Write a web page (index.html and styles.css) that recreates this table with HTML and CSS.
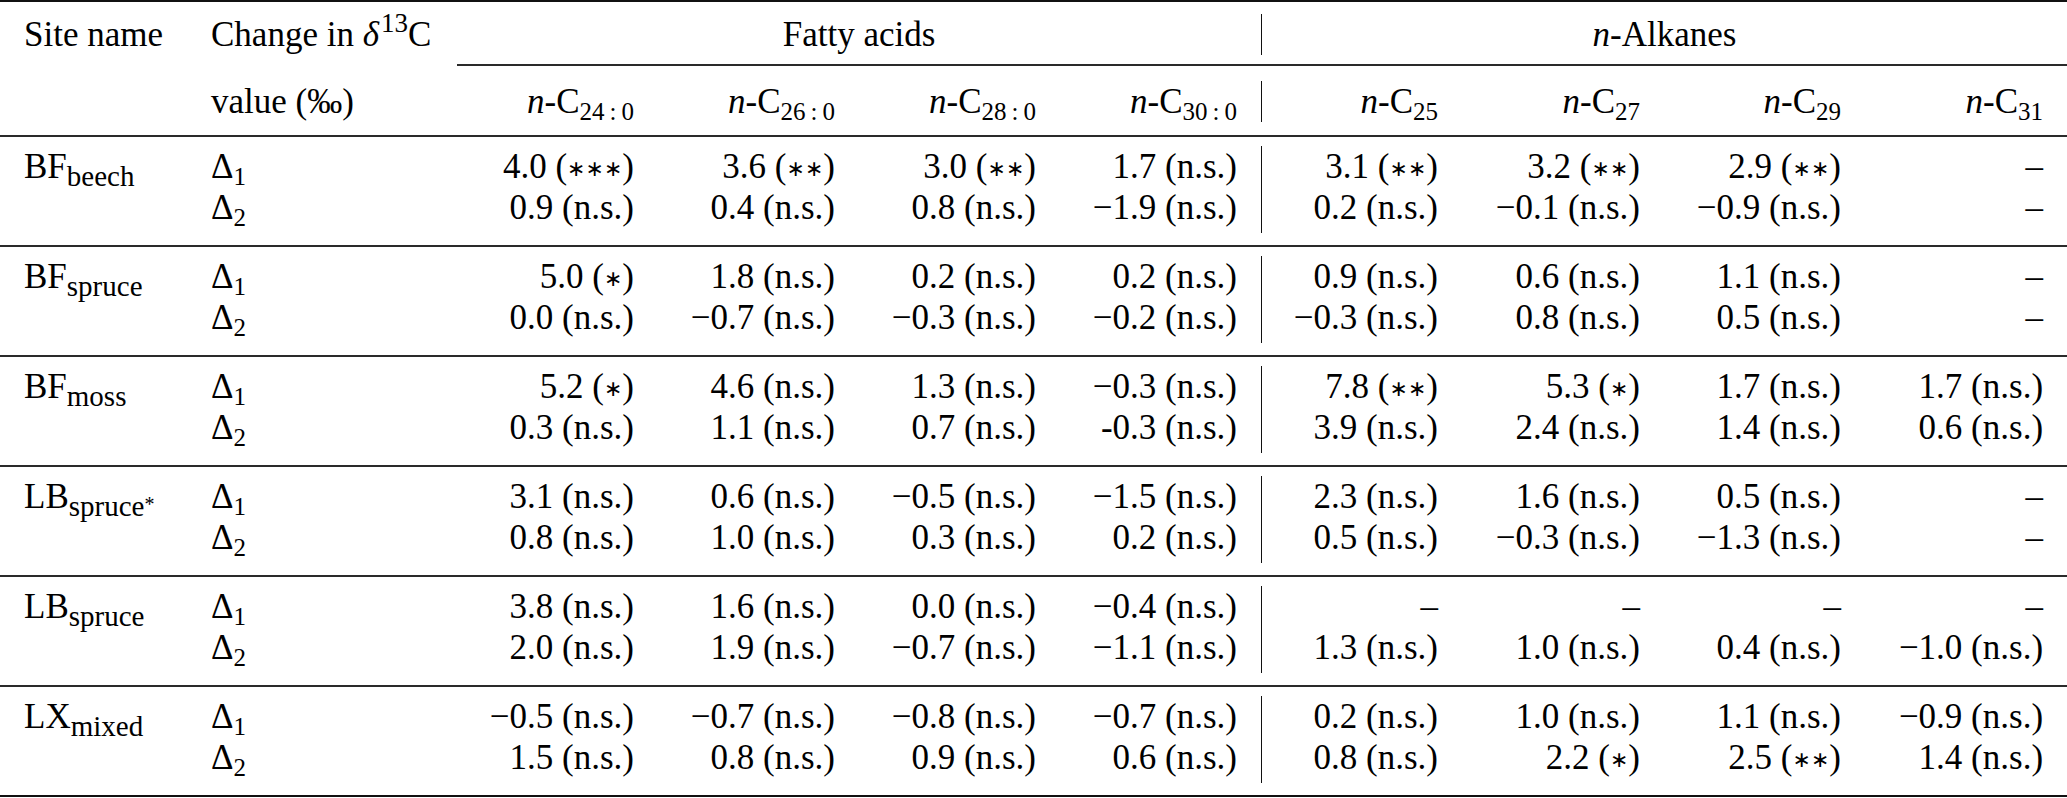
FILE: index.html
```html
<!DOCTYPE html>
<html lang="en">
<head>
<meta charset="utf-8">
<title>Change in δ13C values</title>
<link rel="stylesheet" href="styles.css">
</head>
<body>
<table class="tbl">
  <colgroup>
    <col class="c-site"><col class="c-chg">
    <col class="c-num"><col class="c-num"><col class="c-num"><col class="c-num">
    <col class="c-num"><col class="c-num2"><col class="c-num"><col class="c-num2">
  </colgroup>
  <thead>
    <tr class="h1">
      <td class="lbl">Site name</td>
      <td class="lbl">Change in <i class="delta">δ</i><sup>13</sup>C</td>
      <td class="grp" colspan="4"><div class="in">Fatty acids</div></td>
      <td class="grp bar-cell" colspan="4"><div class="in bar"><i>n</i>-Alkanes</div></td>
    </tr>
    <tr class="h2">
      <td class="lbl"></td>
      <td class="lbl">value (‰)</td>
      <td class="num"><div class="in"><i>n</i>-C<sub>24&thinsp;:&thinsp;0</sub></div></td>
      <td class="num"><div class="in"><i>n</i>-C<sub>26&thinsp;:&thinsp;0</sub></div></td>
      <td class="num"><div class="in"><i>n</i>-C<sub>28&thinsp;:&thinsp;0</sub></div></td>
      <td class="num"><div class="in"><i>n</i>-C<sub>30&thinsp;:&thinsp;0</sub></div></td>
      <td class="num bar-cell"><div class="in bar"><i>n</i>-C<sub>25</sub></div></td>
      <td class="num"><div class="in"><i>n</i>-C<sub>27</sub></div></td>
      <td class="num"><div class="in"><i>n</i>-C<sub>29</sub></div></td>
      <td class="num"><div class="in"><i>n</i>-C<sub>31</sub></div></td>
    </tr>
  </thead>
  <tbody>
    <tr class="g">
      <td class="lbl"><div class="in"><div class="ln">BF<sub class="site">beech</sub></div></div></td>
      <td class="lbl"><div class="in"><div class="ln">Δ<sub>1</sub></div><div class="ln">Δ<sub>2</sub></div></div></td>
      <td class="num"><div class="in"><div class="ln">4.0 (<span class="ast">∗∗∗</span>)</div><div class="ln">0.9 (n.s.)</div></div></td>
      <td class="num"><div class="in"><div class="ln">3.6 (<span class="ast">∗∗</span>)</div><div class="ln">0.4 (n.s.)</div></div></td>
      <td class="num"><div class="in"><div class="ln">3.0 (<span class="ast">∗∗</span>)</div><div class="ln">0.8 (n.s.)</div></div></td>
      <td class="num"><div class="in"><div class="ln">1.7 (n.s.)</div><div class="ln">−1.9 (n.s.)</div></div></td>
      <td class="num bar-cell"><div class="in bar"><div class="ln">3.1 (<span class="ast">∗∗</span>)</div><div class="ln">0.2 (n.s.)</div></div></td>
      <td class="num"><div class="in"><div class="ln">3.2 (<span class="ast">∗∗</span>)</div><div class="ln">−0.1 (n.s.)</div></div></td>
      <td class="num"><div class="in"><div class="ln">2.9 (<span class="ast">∗∗</span>)</div><div class="ln">−0.9 (n.s.)</div></div></td>
      <td class="num"><div class="in"><div class="ln">–</div><div class="ln">–</div></div></td>
    </tr>
    <tr class="g">
      <td class="lbl"><div class="in"><div class="ln">BF<sub class="site">spruce</sub></div></div></td>
      <td class="lbl"><div class="in"><div class="ln">Δ<sub>1</sub></div><div class="ln">Δ<sub>2</sub></div></div></td>
      <td class="num"><div class="in"><div class="ln">5.0 (<span class="ast">∗</span>)</div><div class="ln">0.0 (n.s.)</div></div></td>
      <td class="num"><div class="in"><div class="ln">1.8 (n.s.)</div><div class="ln">−0.7 (n.s.)</div></div></td>
      <td class="num"><div class="in"><div class="ln">0.2 (n.s.)</div><div class="ln">−0.3 (n.s.)</div></div></td>
      <td class="num"><div class="in"><div class="ln">0.2 (n.s.)</div><div class="ln">−0.2 (n.s.)</div></div></td>
      <td class="num bar-cell"><div class="in bar"><div class="ln">0.9 (n.s.)</div><div class="ln">−0.3 (n.s.)</div></div></td>
      <td class="num"><div class="in"><div class="ln">0.6 (n.s.)</div><div class="ln">0.8 (n.s.)</div></div></td>
      <td class="num"><div class="in"><div class="ln">1.1 (n.s.)</div><div class="ln">0.5 (n.s.)</div></div></td>
      <td class="num"><div class="in"><div class="ln">–</div><div class="ln">–</div></div></td>
    </tr>
    <tr class="g">
      <td class="lbl"><div class="in"><div class="ln">BF<sub class="site">moss</sub></div></div></td>
      <td class="lbl"><div class="in"><div class="ln">Δ<sub>1</sub></div><div class="ln">Δ<sub>2</sub></div></div></td>
      <td class="num"><div class="in"><div class="ln">5.2 (<span class="ast">∗</span>)</div><div class="ln">0.3 (n.s.)</div></div></td>
      <td class="num"><div class="in"><div class="ln">4.6 (n.s.)</div><div class="ln">1.1 (n.s.)</div></div></td>
      <td class="num"><div class="in"><div class="ln">1.3 (n.s.)</div><div class="ln">0.7 (n.s.)</div></div></td>
      <td class="num"><div class="in"><div class="ln">−0.3 (n.s.)</div><div class="ln">-0.3 (n.s.)</div></div></td>
      <td class="num bar-cell"><div class="in bar"><div class="ln">7.8 (<span class="ast">∗∗</span>)</div><div class="ln">3.9 (n.s.)</div></div></td>
      <td class="num"><div class="in"><div class="ln">5.3 (<span class="ast">∗</span>)</div><div class="ln">2.4 (n.s.)</div></div></td>
      <td class="num"><div class="in"><div class="ln">1.7 (n.s.)</div><div class="ln">1.4 (n.s.)</div></div></td>
      <td class="num"><div class="in"><div class="ln">1.7 (n.s.)</div><div class="ln">0.6 (n.s.)</div></div></td>
    </tr>
    <tr class="g">
      <td class="lbl"><div class="in"><div class="ln">LB<sub class="site">spruce<span class="sast">*</span></sub></div></div></td>
      <td class="lbl"><div class="in"><div class="ln">Δ<sub>1</sub></div><div class="ln">Δ<sub>2</sub></div></div></td>
      <td class="num"><div class="in"><div class="ln">3.1 (n.s.)</div><div class="ln">0.8 (n.s.)</div></div></td>
      <td class="num"><div class="in"><div class="ln">0.6 (n.s.)</div><div class="ln">1.0 (n.s.)</div></div></td>
      <td class="num"><div class="in"><div class="ln">−0.5 (n.s.)</div><div class="ln">0.3 (n.s.)</div></div></td>
      <td class="num"><div class="in"><div class="ln">−1.5 (n.s.)</div><div class="ln">0.2 (n.s.)</div></div></td>
      <td class="num bar-cell"><div class="in bar"><div class="ln">2.3 (n.s.)</div><div class="ln">0.5 (n.s.)</div></div></td>
      <td class="num"><div class="in"><div class="ln">1.6 (n.s.)</div><div class="ln">−0.3 (n.s.)</div></div></td>
      <td class="num"><div class="in"><div class="ln">0.5 (n.s.)</div><div class="ln">−1.3 (n.s.)</div></div></td>
      <td class="num"><div class="in"><div class="ln">–</div><div class="ln">–</div></div></td>
    </tr>
    <tr class="g">
      <td class="lbl"><div class="in"><div class="ln">LB<sub class="site">spruce</sub></div></div></td>
      <td class="lbl"><div class="in"><div class="ln">Δ<sub>1</sub></div><div class="ln">Δ<sub>2</sub></div></div></td>
      <td class="num"><div class="in"><div class="ln">3.8 (n.s.)</div><div class="ln">2.0 (n.s.)</div></div></td>
      <td class="num"><div class="in"><div class="ln">1.6 (n.s.)</div><div class="ln">1.9 (n.s.)</div></div></td>
      <td class="num"><div class="in"><div class="ln">0.0 (n.s.)</div><div class="ln">−0.7 (n.s.)</div></div></td>
      <td class="num"><div class="in"><div class="ln">−0.4 (n.s.)</div><div class="ln">−1.1 (n.s.)</div></div></td>
      <td class="num bar-cell"><div class="in bar"><div class="ln">–</div><div class="ln">1.3 (n.s.)</div></div></td>
      <td class="num"><div class="in"><div class="ln">–</div><div class="ln">1.0 (n.s.)</div></div></td>
      <td class="num"><div class="in"><div class="ln">–</div><div class="ln">0.4 (n.s.)</div></div></td>
      <td class="num"><div class="in"><div class="ln">–</div><div class="ln">−1.0 (n.s.)</div></div></td>
    </tr>
    <tr class="g">
      <td class="lbl"><div class="in"><div class="ln">LX<sub class="site">mixed</sub></div></div></td>
      <td class="lbl"><div class="in"><div class="ln">Δ<sub>1</sub></div><div class="ln">Δ<sub>2</sub></div></div></td>
      <td class="num"><div class="in"><div class="ln">−0.5 (n.s.)</div><div class="ln">1.5 (n.s.)</div></div></td>
      <td class="num"><div class="in"><div class="ln">−0.7 (n.s.)</div><div class="ln">0.8 (n.s.)</div></div></td>
      <td class="num"><div class="in"><div class="ln">−0.8 (n.s.)</div><div class="ln">0.9 (n.s.)</div></div></td>
      <td class="num"><div class="in"><div class="ln">−0.7 (n.s.)</div><div class="ln">0.6 (n.s.)</div></div></td>
      <td class="num bar-cell"><div class="in bar"><div class="ln">0.2 (n.s.)</div><div class="ln">0.8 (n.s.)</div></div></td>
      <td class="num"><div class="in"><div class="ln">1.0 (n.s.)</div><div class="ln">2.2 (<span class="ast">∗</span>)</div></div></td>
      <td class="num"><div class="in"><div class="ln">1.1 (n.s.)</div><div class="ln">2.5 (<span class="ast">∗∗</span>)</div></div></td>
      <td class="num"><div class="in"><div class="ln">−0.9 (n.s.)</div><div class="ln">1.4 (n.s.)</div></div></td>
    </tr>
  </tbody>
</table>
</body>
</html>
```

FILE: styles.css
```css
html, body {
  margin: 0;
  padding: 0;
  background: #ffffff;
}

.tbl {
  border-collapse: separate;
  border-spacing: 0;
  table-layout: fixed;
  width: 2067px;
  font-family: "Liberation Serif", "Times New Roman", serif;
  font-size: 35px;
  line-height: 41px;
  color: #000000;
  border-top: 2px solid #111111;
  border-bottom: 2px solid #111111;
}

.c-site { width: 187px; }
.c-chg { width: 270px; }
.c-num { width: 201px; }
.c-num2 { width: 202px; }

.tbl td {
  padding: 0 24px;
  vertical-align: top;
  white-space: nowrap;
  text-align: left;
}

.tbl td.num { text-align: right; }
.tbl td.grp { text-align: center; }

.tbl td.bar-cell { padding-left: 0; }
.tbl td.grp.bar-cell { padding-right: 0; }
.grp.bar-cell .in { padding: 0 24px; }

.bar { border-left: 1px solid #111111; }

.ln { height: 41px; }

/* header row 1 */
.h1 td { padding-top: 12px; padding-bottom: 9px; }
.h1 td.grp { padding-bottom: 6px; border-bottom: 2px solid #2a2a2a; }
.h1 .in { padding-bottom: 3px; }

/* header row 2 */
.h2 td {
  padding-top: 15px;
  padding-bottom: 13px;
  border-bottom: 2px solid #2a2a2a;
}

/* data groups */
.g td {
  padding-top: 9px;
  padding-bottom: 12px;
  border-bottom: 2px solid #2a2a2a;
}
.g .in { padding-bottom: 5px; }
.g:last-child td { border-bottom: none; }

sub {
  font-size: 25px;
  line-height: 0;
  vertical-align: -7px;
}

sub.site {
  font-size: 29px;
  vertical-align: -8px;
}

sup {
  font-size: 27px;
  line-height: 0;
  vertical-align: 14px;
}

.delta { margin-right: 2px; }

.ast {
  font-family: "DejaVu Sans", sans-serif;
  font-size: 22px;
  line-height: 0;
  vertical-align: 2px;
}

.sast {
  font-size: 20px;
  line-height: 0;
  vertical-align: 5px;
}
```
